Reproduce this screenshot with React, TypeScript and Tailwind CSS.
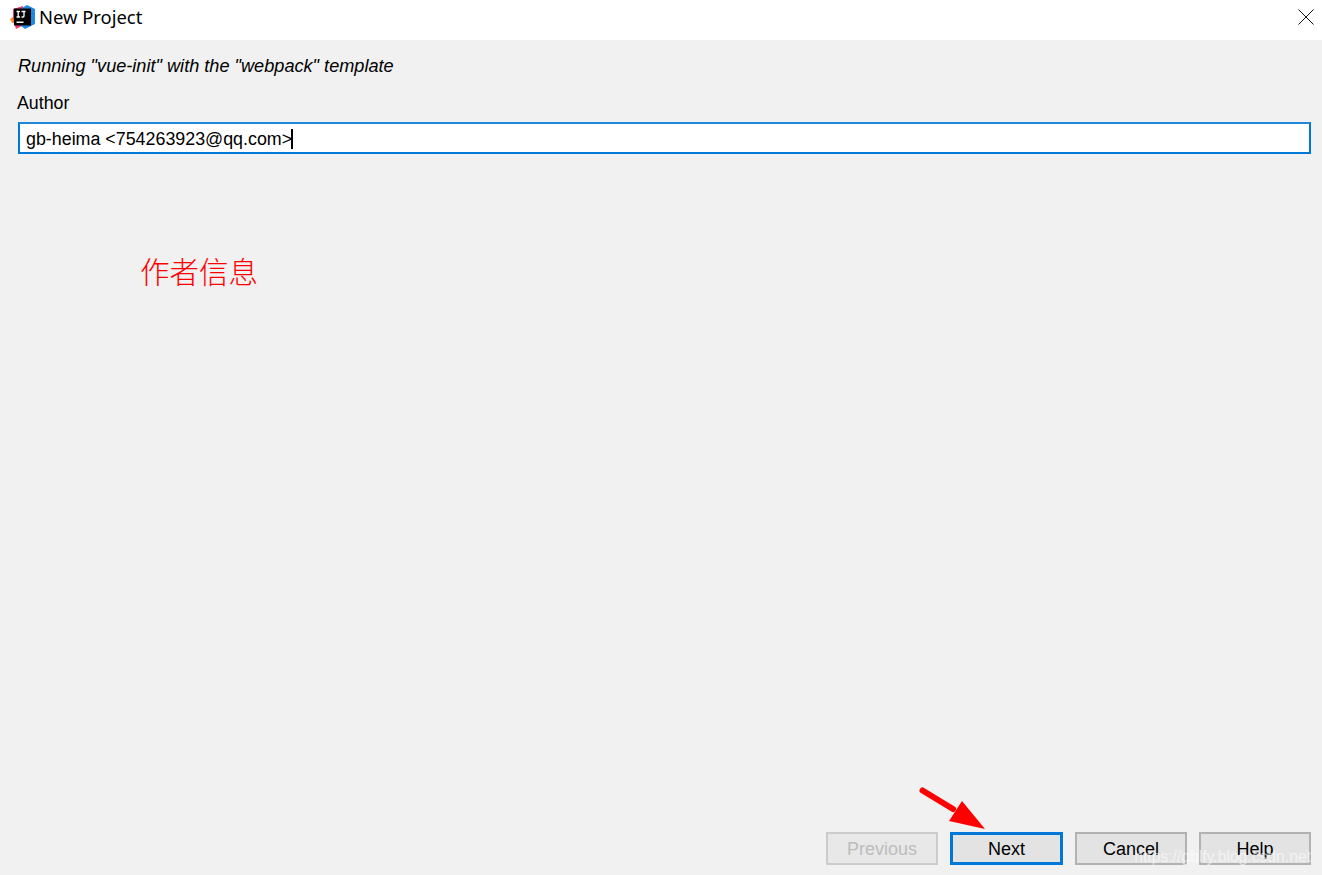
export default function App() {
  const btn = "w-[112px] h-[33px] flex items-center justify-center border-2 border-[#b2b2b2] bg-[#e3e3e3] text-black pt-px";
  return (
    <div className="relative w-[1322px] h-[875px] overflow-hidden flex flex-col bg-[#f1f1f1] text-black font-['Liberation_Sans',sans-serif] text-[18px]">
      <div className="h-[40px] shrink-0 bg-white flex items-center pl-[10px] pr-[9px] pb-[6px]">
        <svg width="25" height="25" viewBox="0 0 25 25" className="shrink-0">
          <path d="M0 14 L4 11 L5 18 L2 18 Z" fill="#f7941d" />
          <path d="M3 4 L13 1 L14 20 L6 24 L3 14 Z" fill="#ee3b6e" />
          <path d="M12 3 L17 0 L25 4 L25 19 L15 24 L10 20 Z" fill="#1e88e5" />
          <rect x="4" y="3.5" width="17" height="17" fill="#000" />
          <path d="M6.5 6.5 H10 M8.2 6.5 V12 M6.5 12 H10 M11.5 6.5 H15.5 M14 6.5 V11 Q14 12 13 12 H11.5" stroke="#fff" strokeWidth="1.3" fill="none" />
          <rect x="6.5" y="16.5" width="7" height="1.5" fill="#fff" />
        </svg>
        <span className="ml-[4px] text-[18.4px] leading-[24px] font-['Noto_Sans',sans-serif]">New Project</span>
        <svg width="16" height="16" viewBox="0 0 16 16" className="ml-auto -mr-px">
          <path d="M0.5 0.5 L15.5 15.5 M15.5 0.5 L0.5 15.5" stroke="#111" strokeWidth="1" fill="none" />
        </svg>
      </div>
      <div className="flex-1 flex flex-col pl-[18px] pr-[11px] pb-[10px]">
        <div className="mt-[16px] leading-[20px] italic text-[18.15px]">Running "vue-init" with the "webpack" template</div>
        <div className="mt-[17px] leading-[20px] -ml-px text-[17.8px]">Author</div>
        <div className="mt-[9px] h-[32px] border-2 border-[#0078d7] border-t-[#1f86d9] bg-white flex items-center pl-[6px] pt-[2px] text-[17.85px]">
          <span>gb-heima &lt;754263923@qq.com&gt;</span>
          <span className="w-[2px] h-[20px] bg-black -ml-[1px]" />
        </div>
        <div className="mt-auto flex justify-end gap-[12px]">
          <div className="w-[112px] h-[33px] flex items-center justify-center border-2 border-[#cccccc] bg-[#e8e8e8] text-[#bcbcbc] font-medium pt-px">Previous</div>
          <div className="w-[113px] h-[33px] flex items-center justify-center border-[3px] border-[#0078d7] bg-[#e3e3e3] pt-px">Next</div>
          <div className={btn}>Cancel</div>
          <div className={btn}>Help</div>
        </div>
      </div>
      <div className="absolute left-[140px] top-[249px] text-[29.5px] leading-[42px] text-[#ff0000] font-['Noto_Sans_CJK_SC',sans-serif] font-light">作者信息</div>
      <svg width="80" height="52" viewBox="0 0 80 52" className="absolute left-[915px] top-[783px]">
        <path d="M7.5 7.5 L38 26" stroke="#ff0000" strokeWidth="6" strokeLinecap="round" fill="none" />
        <path d="M47 18 L70 46 L34 38 Z" fill="#ff0000" />
      </svg>
      <div className="absolute right-[11px] top-[847px] text-[15.7px] leading-[20px] text-white/55">https://gblfy.blog.csdn.net</div>
    </div>
  );
}
